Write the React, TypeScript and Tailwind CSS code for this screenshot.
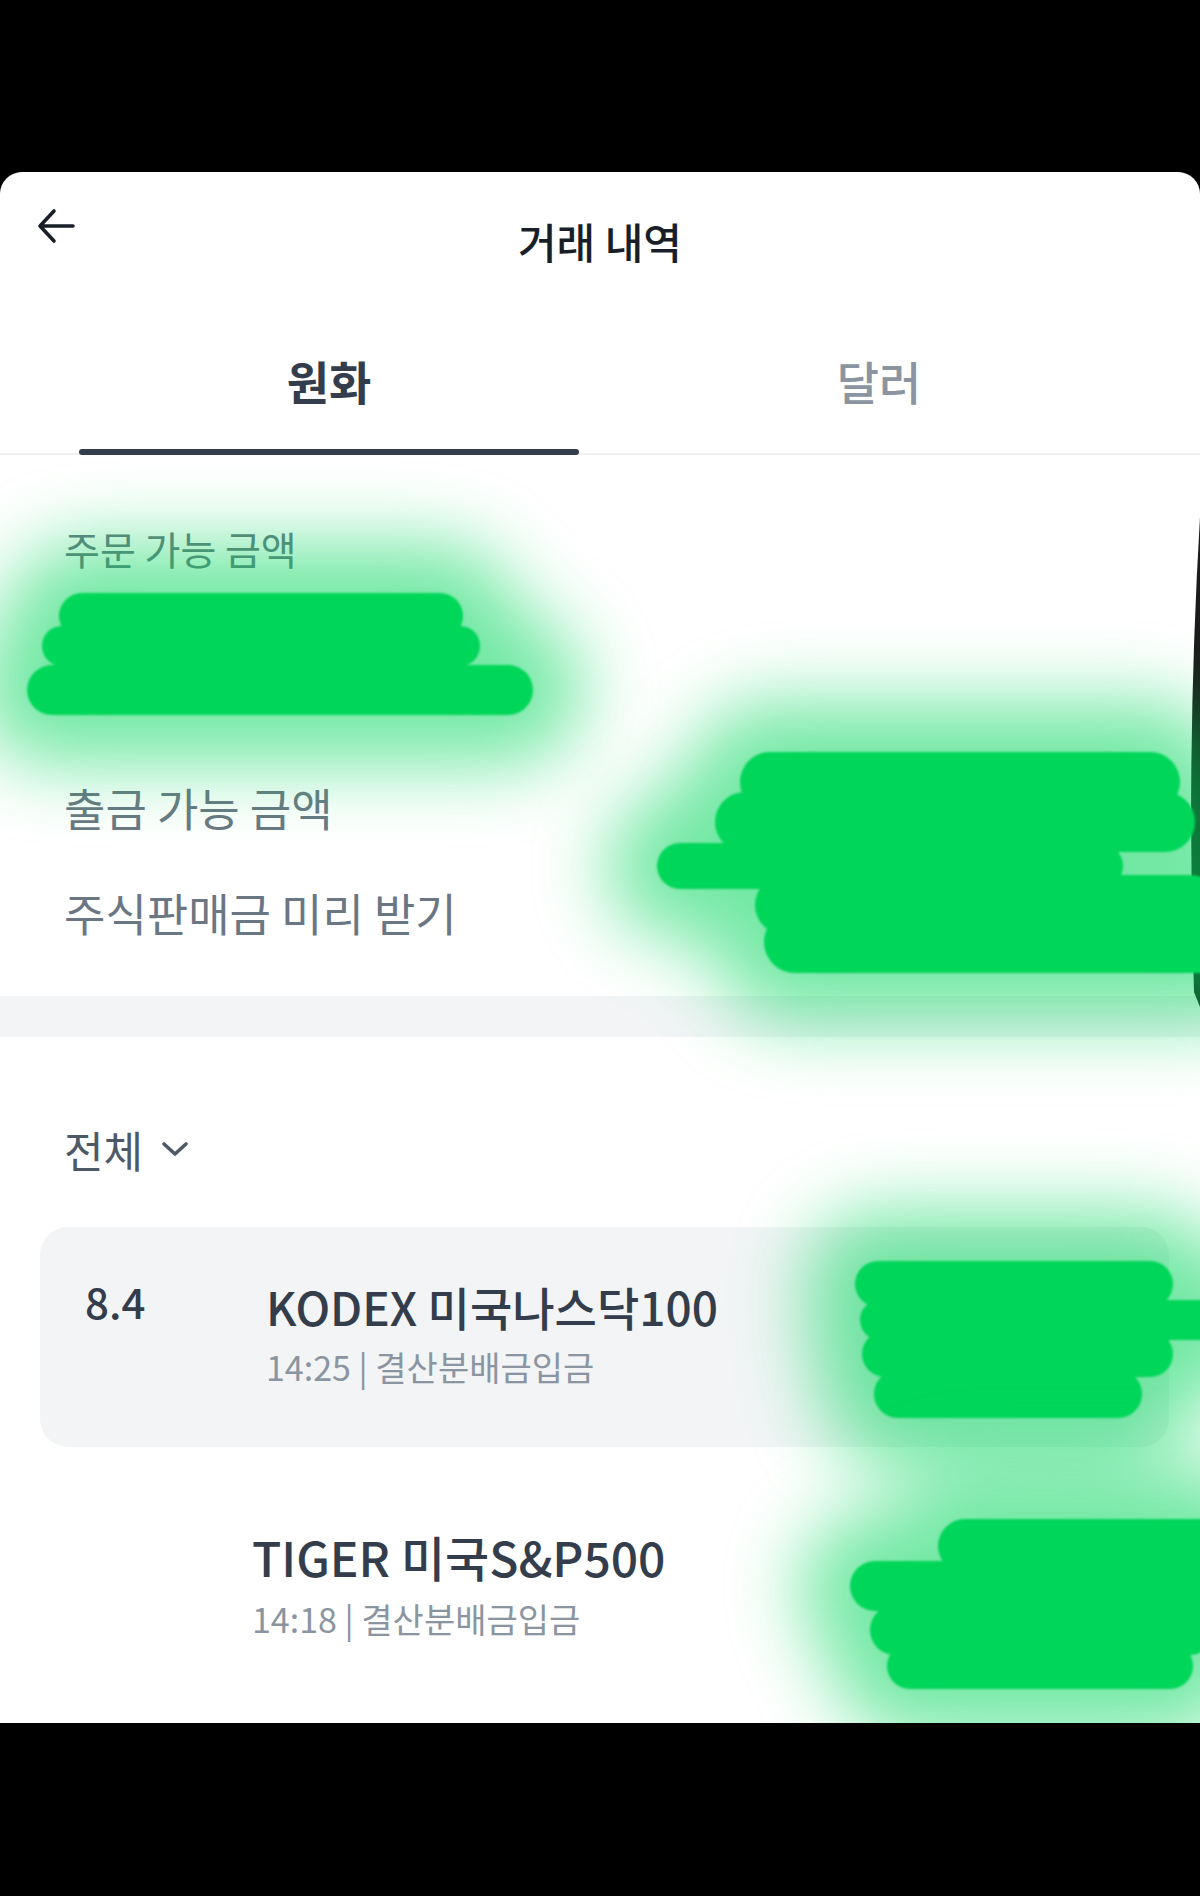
import React from 'react';

// redaction marker strokes, panel coordinates: [x1, x2, y, width]
const blobs: number[][][] = [
    [
        [82, 440, 444, 46],
        [62, 460, 474, 40],
        [52, 508, 518, 50],
    ],
    [
        [770, 1150, 610, 60],
        [745, 1165, 650, 60],
        [680, 1100, 694, 46],
        [785, 1190, 733, 60],
        [795, 1205, 770, 62],
    ],
    [
        [878, 1150, 1112, 46],
        [880, 1205, 1148, 40],
        [885, 1150, 1182, 46],
        [898, 1118, 1222, 48],
    ],
    [
        [965, 1205, 1374, 54],
        [875, 1205, 1414, 50],
        [895, 1190, 1458, 50],
        [910, 1170, 1494, 46],
    ],
];

function Redactions() {
    return (
        <svg
            className="pointer-events-none absolute left-0 top-0"
            width="1200"
            height="1551"
            viewBox="0 0 1200 1551"
        >
            <defs>
                <filter id="glow" filterUnits="userSpaceOnUse" x="0" y="0" width="1200" height="1551">
                    <feGaussianBlur stdDeviation="38" />
                </filter>
                <filter id="soft" filterUnits="userSpaceOnUse" x="0" y="0" width="1200" height="1551">
                    <feGaussianBlur stdDeviation="1.2" />
                </filter>
            </defs>
            {/* phone edge sliver */}
            <path d="M1200 345 Q1186 580 1194 820 L1200 835 Z" fill="#1b1b1b" />
            {blobs.map((b, i) => (
                <g key={i}>
                    <g filter="url(#glow)" opacity="0.55">
                        {b.map((s, j) => (
                            <line
                                key={j}
                                x1={s[0]}
                                x2={s[1]}
                                y1={s[2]}
                                y2={s[2]}
                                stroke="#00d65a"
                                strokeWidth={s[3] + 100}
                                strokeLinecap="round"
                            />
                        ))}
                    </g>
                    <g filter="url(#soft)">
                        {b.map((s, j) => (
                            <line
                                key={j}
                                x1={s[0]}
                                x2={s[1]}
                                y1={s[2]}
                                y2={s[2]}
                                stroke="#00d65a"
                                strokeWidth={s[3]}
                                strokeLinecap="round"
                            />
                        ))}
                    </g>
                </g>
            ))}
        </svg>
    );
}

function App() {
    return (
        <div className="w-[1200px] h-[1896px] bg-black pt-[172px] font-['Noto_Sans_CJK_KR',sans-serif]">
            <div className="relative h-[1551px] bg-white rounded-t-[22px] overflow-hidden">
                {/* header */}
                <div className="grid grid-cols-[1fr_auto_1fr] h-[140px]">
                    <div className="pl-[36px] pt-[34px]">
                        <svg width="40" height="40" viewBox="0 0 40 40" fill="none">
                            <path
                                d="M37 20H4M18 5L4 20l14 15"
                                stroke="#191f28"
                                strokeWidth="3.6"
                                strokeLinecap="round"
                                strokeLinejoin="round"
                            />
                        </svg>
                    </div>
                    <div className="pt-[45px] text-[42px] leading-[48px] font-medium text-[#191f28]">
                        거래 내역
                    </div>
                    <div />
                </div>

                {/* tabs */}
                <div className="flex gap-[50px] pl-[79px] border-b-2 border-[#eef0f2]">
                    <div className="w-[500px] flex flex-col items-center">
                        <div className="pt-[38px] pb-[39px] text-[46px] leading-[60px] font-bold text-[#333d4b]">
                            원화
                        </div>
                        <div className="w-full h-[6px] -mb-[2px] rounded-full bg-[#333d4b]" />
                    </div>
                    <div className="w-[500px] flex flex-col items-center">
                        <div className="pt-[38px] pb-[39px] text-[46px] leading-[60px] font-medium text-[#8b95a1]">
                            달러
                        </div>
                    </div>
                </div>

                {/* balances */}
                <div className="pl-[64px] pt-[68px] pb-[55px]">
                    <div className="text-[39px] leading-[50px] text-[#6b7684]">주문 가능 금액</div>
                    <div className="h-[207px]" />
                    <div className="text-[45px] leading-[56px] text-[#6b7684]">출금 가능 금액</div>
                    <div className="mt-[49px] text-[45px] leading-[56px] text-[#6b7684]">
                        주식판매금 미리 받기
                    </div>
                </div>

                <div className="h-[41px] bg-[#f2f4f6]" />

                {/* history */}
                <div className="pt-[84px]">
                    <div className="flex items-center gap-[18px] pl-[64px] text-[43px] leading-[56px] text-[#4e5968]">
                        전체
                        <svg width="28" height="16" viewBox="0 0 28 16" fill="none">
                            <path
                                d="M3 3l11 10L25 3"
                                stroke="#4e5968"
                                strokeWidth="3.6"
                                strokeLinecap="round"
                                strokeLinejoin="round"
                            />
                        </svg>
                    </div>

                    <div className="ml-[40px] mr-[31px] mt-[50px] h-[220px] rounded-[28px] bg-[#f2f4f6] flex pl-[45px] pt-[52px]">
                        <div className="w-[181px] -mt-[5px] text-[42px] leading-[54px] font-medium text-[#333d4b]">
                            8.4
                        </div>
                        <div className="flex flex-col">
                            <div className="text-[46px] leading-[54px] font-medium text-[#333d4b]">
                                KODEX 미국나스닥100
                            </div>
                            <div className="mt-[12px] text-[34px] leading-[44px] text-[#8b95a1]">
                                14:25 | 결산분배금입금
                            </div>
                        </div>
                    </div>

                    <div className="flex pl-[71px] mt-[82px]">
                        <div className="w-[181px]" />
                        <div className="flex flex-col">
                            <div className="text-[48px] leading-[54px] font-medium text-[#333d4b]">
                                TIGER 미국S&amp;P500
                            </div>
                            <div className="mt-[14px] text-[34px] leading-[44px] text-[#8b95a1]">
                                14:18 | 결산분배금입금
                            </div>
                        </div>
                    </div>
                </div>

                <Redactions />
            </div>
        </div>
    );
}

export default App;
